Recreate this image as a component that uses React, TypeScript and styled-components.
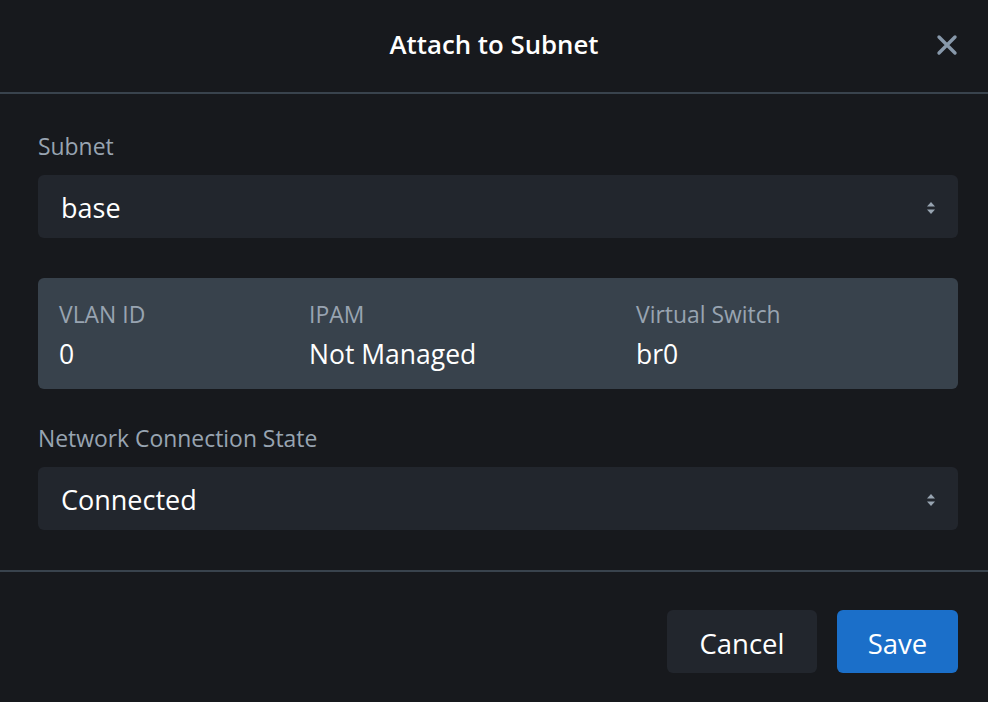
import React from 'react';
import styled, { createGlobalStyle } from 'styled-components';

const GlobalStyle = createGlobalStyle`
  html, body {
    margin: 0;
    padding: 0;
    background: #17191d;
  }
  body {
    font-family: 'Open Sans', Lato, sans-serif;
    color: #ffffff;
  }
`;

const Dialog = styled.div`
  width: 988px;
  height: 702px;
  background: #17191d;
  display: flex;
  flex-direction: column;
`;

const Header = styled.div`
  height: 94px;
  display: flex;
  align-items: center;
  justify-content: center;
  position: relative;
  border-bottom: 2px solid #39434d;
  box-sizing: border-box;
  padding-bottom: 4px;
`;

const Title = styled.h1`
  margin: 0;
  font-size: 25.8px;
  line-height: 32px;
  font-weight: 600;
  color: #ffffff;
`;

const CloseButton = styled.button`
  position: absolute;
  right: 29px;
  top: 33px;
  width: 24px;
  height: 24px;
  padding: 0;
  border: none;
  background: transparent;
  cursor: pointer;
  display: flex;
  align-items: center;
  justify-content: center;
`;

const Body = styled.div`
  padding: 39px 30px 40px 38px;
  border-bottom: 2px solid #39434d;
  display: flex;
  flex-direction: column;
`;

const Label = styled.label`
  font-size: 22.9px;
  line-height: 28px;
  color: #98a4b1;
  margin-bottom: 14px;
`;

const Select = styled.div<{ $mb?: number }>`
  height: 63px;
  box-sizing: border-box;
  background: #22262d;
  border-radius: 6px;
  display: flex;
  align-items: center;
  justify-content: space-between;
  padding: 2px 22px 0 23px;
  font-size: 27px;
  color: #ffffff;
  margin-bottom: ${({ $mb }) => $mb ?? 0}px;
`;

const InfoBox = styled.div`
  background: #38424c;
  border-radius: 6px;
  padding: 23px 21px 19px;
  display: grid;
  grid-template-columns: 250px 327px 1fr;
  margin-bottom: 36px;
`;

const InfoCell = styled.div`
  display: flex;
  flex-direction: column;
  gap: 9px;
`;

const InfoLabel = styled.span`
  font-size: 22.9px;
  line-height: 28px;
  color: #98a4b1;
`;

const InfoValue = styled.span`
  font-size: 26.5px;
  line-height: 32px;
  color: #ffffff;
`;

const Footer = styled.div`
  display: flex;
  justify-content: flex-end;
  gap: 20px;
  padding: 38px 30px 0;
`;

const Button = styled.button<{ $primary?: boolean }>`
  height: 63px;
  width: ${({ $primary }) => ($primary ? 121 : 150)}px;
  padding: 4px 0 0;
  border: none;
  border-radius: 6px;
  font-family: inherit;
  font-size: 27.5px;
  color: #ffffff;
  background: ${({ $primary }) => ($primary ? '#1b6fc9' : '#22262d')};
  cursor: pointer;
`;

const SortIcon = () => (
  <svg width="10" height="16" viewBox="0 0 10 16">
    <path d="M5 2 L9 6.5 H1 Z" fill="#98a4b1" />
    <path d="M5 14 L9 9.5 H1 Z" fill="#98a4b1" />
  </svg>
);

const info = [
  { label: 'VLAN ID', value: '0' },
  { label: 'IPAM', value: 'Not Managed' },
  { label: 'Virtual Switch', value: 'br0' },
];

export default function App() {
  return (
    <>
      <GlobalStyle />
      <Dialog>
        <Header>
          <Title>Attach to Subnet</Title>
          <CloseButton aria-label="close">
            <svg width="22" height="22" viewBox="0 0 22 22">
              <path d="M3 3 L19 19 M19 3 L3 19" stroke="#8798aa" strokeWidth="3.4" strokeLinecap="round" />
            </svg>
          </CloseButton>
        </Header>
        <Body>
          <Label>Subnet</Label>
          <Select $mb={40}>
            <span>base</span>
            <SortIcon />
          </Select>
          <InfoBox>
            {info.map((item) => (
              <InfoCell key={item.label}>
                <InfoLabel>{item.label}</InfoLabel>
                <InfoValue>{item.value}</InfoValue>
              </InfoCell>
            ))}
          </InfoBox>
          <Label>Network Connection State</Label>
          <Select>
            <span>Connected</span>
            <SortIcon />
          </Select>
        </Body>
        <Footer>
          <Button>Cancel</Button>
          <Button $primary>Save</Button>
        </Footer>
      </Dialog>
    </>
  );
}
